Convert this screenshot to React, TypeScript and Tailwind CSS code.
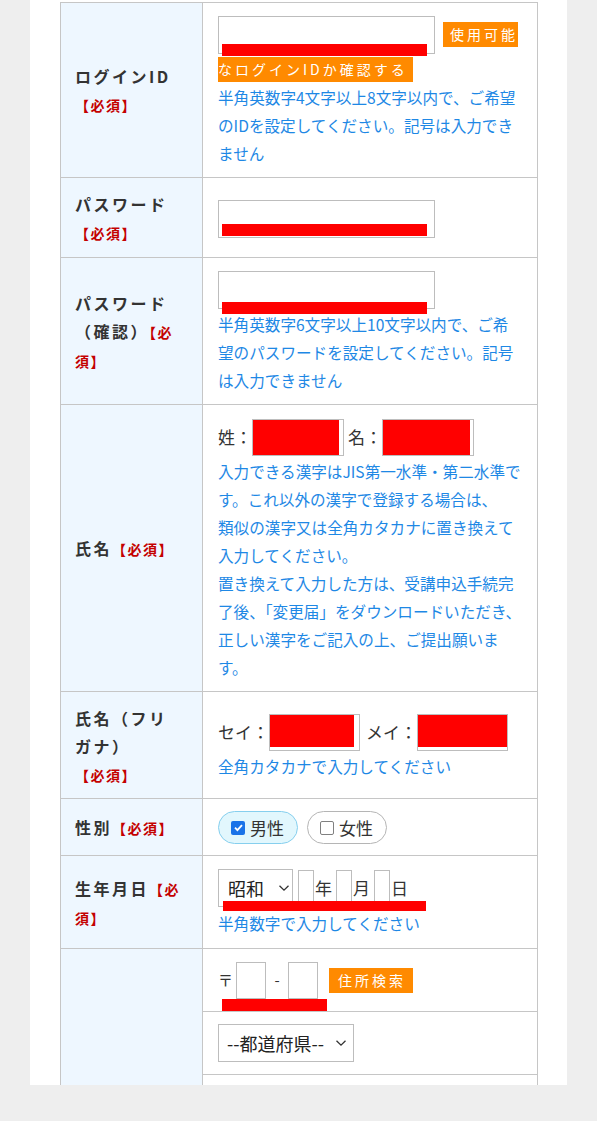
import type { ReactNode } from "react";

const LINE = "border-[#c6c6c6]";

function Required() {
  return <span className="text-[14px] font-bold tracking-[1.5px] text-[#c40000]">【必須】</span>;
}

function Help({ children, className = "" }: { children: ReactNode; className?: string }) {
  return (
    <p className={`whitespace-nowrap text-[15.6px] leading-[28px] text-[#1e88e5] ${className}`}>{children}</p>
  );
}

function Row({
  label,
  children,
  labelPad = "pt-[12px] pb-[11px]",
  content = "pt-[12px] pb-[10px]",
}: {
  label: ReactNode;
  children: ReactNode;
  labelPad?: string;
  content?: string;
}) {
  return (
    <div className={`grid grid-cols-[142px_1fr] border-t ${LINE}`}>
      <div className={`flex items-center border-r ${LINE} bg-[#eef7ff] pl-[14px] pr-1 ${labelPad}`}>
        <div className="whitespace-nowrap text-[16px] font-bold leading-[28px] tracking-[2.5px] text-[#333]">
          {label}
        </div>
      </div>
      <div className={`flex flex-col justify-center pl-[15px] pr-[12px] ${content}`}>{children}</div>
    </div>
  );
}

function OrangeTag({ children, className = "" }: { children: ReactNode; className?: string }) {
  return (
    <span
      className={`inline-block h-[25px] bg-[#ff8a00] text-[14px] leading-[25px] tracking-[3px] text-white ${className}`}
    >
      {children}
    </span>
  );
}

function TextBox({ w, h = "h-[38px]" }: { w: string; h?: string }) {
  return <input type="text" className={`${w} ${h} border border-[#bdbdbd] bg-white`} />;
}

function Redacted({ w, insetR, insetB }: { w: string; insetR: string; insetB: string }) {
  return (
    <span className={`relative inline-block h-[37px] ${w} border border-[#bdbdbd] bg-white`}>
      <span className={`absolute left-0 top-0 ${insetR} ${insetB} bg-[#ff0000]`} />
    </span>
  );
}

function Chevron({ className }: { className: string }) {
  return (
    <svg
      viewBox="0 0 12 7"
      className={`pointer-events-none absolute top-1/2 h-[7px] w-[12px] -translate-y-1/2 ${className}`}
      fill="none"
      stroke="#333"
      strokeWidth="1.3"
    >
      <path d="M1.5 1.2l4.5 4.5 4.5-4.5" />
    </svg>
  );
}

function Pill({ checked, label }: { checked: boolean; label: string }) {
  return (
    <span
      className={[
        "flex h-[33px] items-center gap-[5px] rounded-full border pl-[12px] pr-[13px]",
        checked ? "border-[#86cfee] bg-[#e2f7fd]" : "border-[#b5b5b5] bg-white",
      ].join(" ")}
    >
      {checked ? (
        <span className="flex h-[14px] w-[14px] items-center justify-center rounded-[2px] bg-[#1a73e8]">
          <svg viewBox="0 0 12 12" className="h-[11px] w-[11px]" fill="none" stroke="#fff" strokeWidth="2">
            <path d="M2.2 6.2l2.6 2.6 5-5.4" />
          </svg>
        </span>
      ) : (
        <span className="h-[14px] w-[14px] rounded-[2px] border border-[#808080] bg-white" />
      )}
      <span className="text-[17px] text-[#333]">{label}</span>
    </span>
  );
}

export default function App() {
  return (
    <div className="min-h-[1121px] bg-[#eeeeee] font-['Noto_Sans_CJK_JP','Noto_Sans',sans-serif]">
      <div className="ml-[30px] h-[1085px] w-[537px] overflow-hidden bg-white pt-[2px]">
        <div className={`ml-[30px] w-[478px] border-x ${LINE}`}>
          {/* ログインID */}
          <Row
            label={
              <>
                ログインID
                <br />
                <Required />
              </>
            }
          >
            <div className="relative flex h-[40px] items-center">
              <TextBox w="w-[217px]" />
              <OrangeTag className="ml-[8px] -mt-[2px] pl-[7px]">使用可能</OrangeTag>
              <span className="absolute left-[4px] top-[29px] h-[12px] w-[205px] bg-[#ff0000]" />
            </div>
            <div className="flex h-[28px] items-center">
              <OrangeTag className="pr-[5px]">なログインIDか確認する</OrangeTag>
            </div>
            <Help>
              半角英数字4文字以上8文字以内で、ご希望
              <br />
              のIDを設定してください。記号は入力でき
              <br />
              ません
            </Help>
          </Row>

          {/* パスワード */}
          <Row
            labelPad="pt-[12px] pb-[10px]"
            label={
              <>
                パスワード
                <br />
                <Required />
              </>
            }
          >
            <div className="relative flex h-[40px] items-center">
              <TextBox w="w-[217px]" />
              <span className="absolute left-[4px] top-[25px] h-[12px] w-[205px] bg-[#ff0000]" />
            </div>
          </Row>

          {/* パスワード（確認） */}
          <Row
            label={
              <>
                パスワード
                <br />
                （確認）
                <span className="text-[14px] tracking-[1.5px] text-[#c40000]">【必</span>
                <br />
                <span className="text-[14px] tracking-[1.5px] text-[#c40000]">須】</span>
              </>
            }
          >
            <div className="relative flex h-[40px] items-center">
              <TextBox w="w-[217px]" />
              <span className="absolute left-[4px] top-[32px] h-[12px] w-[205px] bg-[#ff0000]" />
            </div>
            <Help>
              半角英数字6文字以上10文字以内で、ご希
              <br />
              望のパスワードを設定してください。記号
              <br />
              は入力できません
            </Help>
          </Row>

          {/* 氏名 */}
          <Row
            label={
              <>
                氏名
                <Required />
              </>
            }
          >
            <div className="flex h-[40px] items-center text-[17px] text-[#333]">
              <span>姓：</span>
              <Redacted w="w-[92px]" insetR="right-[4px]" insetB="bottom-0" />
              <span className="ml-[4px]">名：</span>
              <Redacted w="w-[92px]" insetR="right-[3px]" insetB="bottom-0" />
            </div>
            <Help>
              入力できる漢字はJIS第一水準・第二水準で
              <br />
              す。これ以外の漢字で登録する場合は、
              <br />
              類似の漢字又は全角カタカナに置き換えて
              <br />
              入力してください。
              <br />
              置き換えて入力した方は、受講申込手続完
              <br />
              了後、「変更届」をダウンロードいただき、
              <br />
              正しい漢字をご記入の上、ご提出願いま
              <br />
              す。
            </Help>
          </Row>

          {/* 氏名（フリガナ） */}
          <Row
            labelPad="pt-[12px] pb-[9px]"
            label={
              <>
                氏名（フリ
                <br />
                ガナ）
                <br />
                <Required />
              </>
            }
          >
            <div className="flex h-[40px] items-center text-[17px] text-[#333]">
              <span>セイ：</span>
              <Redacted w="w-[91px]" insetR="right-[5px]" insetB="bottom-[3px]" />
              <span className="ml-[6px]">メイ：</span>
              <Redacted w="w-[91px]" insetR="right-0" insetB="bottom-[3px]" />
            </div>
            <Help>全角カタカナで入力してください</Help>
          </Row>

          {/* 性別 */}
          <Row
            content="pt-[11px] pb-[10px]"
            label={
              <>
                性別
                <Required />
              </>
            }
          >
            <div className="flex h-[35px] items-center gap-[9px]">
              <Pill checked label="男性" />
              <Pill checked={false} label="女性" />
            </div>
          </Row>

          {/* 生年月日 */}
          <Row
            content="pt-[12px] pb-[11px]"
            label={
              <>
                生年月日
                <span className="text-[14px] tracking-[1.5px] text-[#c40000]">【必</span>
                <br />
                <span className="text-[14px] tracking-[1.5px] text-[#c40000]">須】</span>
              </>
            }
          >
            <div className="relative flex h-[40px] items-center text-[17px] text-[#333]">
              <div className="relative">
                <select
                  defaultValue="showa"
                  className="h-[38px] w-[75px] appearance-none border border-[#bdbdbd] bg-white pl-[9px] text-[18px] text-[#222]"
                >
                  <option value="showa">昭和</option>
                  <option value="heisei">平成</option>
                </select>
                <Chevron className="right-[3px]" />
              </div>
              <TextBox w="ml-[5px] w-[16px]" h="h-[36px]" />
              <span className="ml-[1px] mr-[4px]">年</span>
              <TextBox w="w-[16px]" h="h-[36px]" />
              <span className="ml-[1px] mr-[4px]">月</span>
              <TextBox w="w-[16px]" h="h-[36px]" />
              <span className="ml-[1px]">日</span>
              <span className="absolute left-[5px] top-[33px] h-[10px] w-[203px] bg-[#ff0000]" />
            </div>
            <Help className="mt-[1px]">半角数字で入力してください</Help>
          </Row>

          {/* 住所 (label sits below the visible area) */}
          <div className={`grid grid-cols-[142px_1fr] border-t ${LINE}`}>
            <div className={`border-r ${LINE} bg-[#eef7ff]`} />
            <div className="flex flex-col">
              <div className="pl-[15px] pt-[12px] pb-[12px]">
                <div className="relative flex h-[38px] items-center text-[#333]">
                  <span className="text-[15px]">〒</span>
                  <TextBox w="ml-[3px] w-[30px]" h="h-[37px]" />
                  <span className="w-[22px] text-center text-[15px]">-</span>
                  <TextBox w="w-[30px]" h="h-[37px]" />
                  <OrangeTag className="ml-[11px] pl-[9px] pr-[7px]">住所検索</OrangeTag>
                  <span className="absolute left-[4px] top-[38px] h-[12px] w-[105px] bg-[#ff0000]" />
                </div>
              </div>
              <div className={`border-t ${LINE} pl-[15px] pt-[12px] pb-[12px]`}>
                <div className="relative w-[136px]">
                  <select
                    defaultValue=""
                    className="h-[38px] w-[136px] appearance-none border border-[#bdbdbd] bg-white pl-[8px] text-[18px] text-[#222]"
                  >
                    <option value="">--都道府県--</option>
                    <option value="tokyo">東京都</option>
                  </select>
                  <Chevron className="right-[7px]" />
                </div>
              </div>
              <div className={`border-t ${LINE} pl-[15px] pt-[12px] pb-[12px]`}>
                <input type="text" className="h-[38px] w-[280px] border border-[#bdbdbd] bg-white" />
              </div>
            </div>
          </div>
        </div>
      </div>
    </div>
  );
}
